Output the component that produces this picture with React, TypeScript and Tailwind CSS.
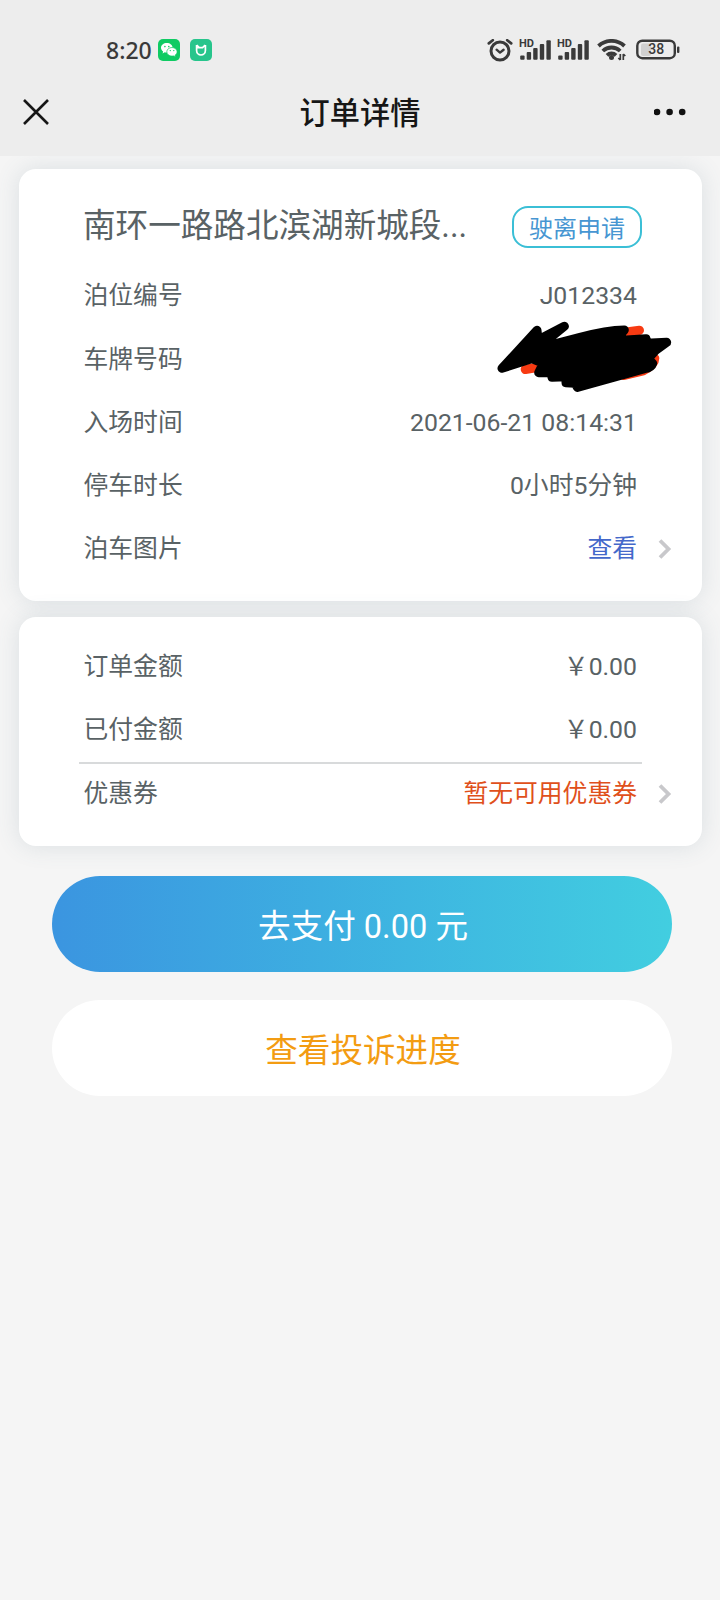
import React from "react";

const Chevron: React.FC = () => (
  <svg className="absolute right-[30px] top-1/2 -mt-[11px] h-5 w-[14px]" viewBox="0 0 14 20" fill="none">
    <path d="M2 1.5 L10.5 10 L2 18.5" stroke="#c8c8cb" strokeWidth="3.8" />
  </svg>
);

const Signal: React.FC = () => (
  <svg className="h-[22px] w-8" viewBox="0 0 32 22">
    <text
      x="0"
      y="7.8"
      fontSize="10"
      fontWeight="700"
      fontFamily="Roboto, sans-serif"
      textLength="15"
      lengthAdjust="spacingAndGlyphs"
      fill="#3a3a3a"
    >
      HD
    </text>
    <g fill="#3a3a3a">
      <rect x="1.2" y="16.6" width="4.4" height="4.2" rx="1" />
      <rect x="7.7" y="13" width="4.4" height="7.8" rx="1" />
      <rect x="14.2" y="9" width="4.4" height="11.8" rx="1" />
      <rect x="20.8" y="5" width="4.4" height="15.8" rx="1" />
      <rect x="27.4" y="1.2" width="4.4" height="19.6" rx="1" />
    </g>
  </svg>
);

const StatusBar: React.FC = () => (
  <div className="flex h-[68px] items-start justify-between pl-[106px] pr-[40px] pt-[39px]">
    <div className="flex items-center">
      <span className="w-[52px] font-['Noto_Sans','Open_Sans',sans-serif] text-[23px] font-medium leading-[22px] text-[#3a3a3a]">
        8:20
      </span>
      <svg className="h-[22px] w-[22px]" viewBox="0 0 22 22">
        <rect width="22" height="22" rx="5" fill="#0fcb63" />
        <path d="M8.800 4C5.600 4 3 6.100 3 8.800c0 1.500.8 2.800 2.100 3.700l-.5 1.900 2.100-1.100c.6.2 1.300.3 2 .3 3.300 0 5.900-2.100 5.900-4.800S12.100 4 8.800 4z" fill="#fff" />
        <path d="M14 8.500c-2.900 0-5.200 1.900-5.200 4.300s2.300 4.300 5.200 4.300c.6 0 1.200-.1 1.700-.2l1.800.9-.4-1.600c1.200-.8 2-2 2-3.400 0-2.400-2.300-4.300-5.100-4.300z" fill="#fff" stroke="#0fcb63" strokeWidth=".7" />
        <g fill="#0fcb63">
          <circle cx="6.900" cy="7.600" r=".8" />
          <circle cx="10.800" cy="7.600" r=".8" />
          <circle cx="12.300" cy="11.600" r=".7" />
          <circle cx="15.800" cy="11.600" r=".7" />
        </g>
      </svg>
      <svg className="ml-[10px] h-[22px] w-[22px]" viewBox="0 0 22 22" fill="none" stroke="#fff">
        <rect width="22" height="22" rx="5" fill="#27c58c" stroke="none" />
        <path d="M9.200 8.700H6.900V6M6.600 6v5.600a4.400 4.400 0 0 0 8.800 0V6M15.200 6l-2.600 2.700H9.200L6.700 6" strokeWidth="1.700" strokeLinejoin="round" />
      </svg>
    </div>

    <div className="flex items-start">
      <svg className="-ml-px mr-px h-6 w-[26px]" viewBox="0 0 26 24" fill="none" stroke="#3a3a3a" strokeLinecap="round">
        <circle cx="13" cy="12" r="9" strokeWidth="3" />
        <path d="M9.600 10.700l3.400 2.900 3.600-2.900" strokeWidth="2.400" strokeLinejoin="round" />
        <path d="M1.800 4.400l4-3.200M24.200 4.400l-4-3.200" strokeWidth="2.700" />
      </svg>
      <div className="ml-[5px] mr-px flex gap-[6px]">
        <Signal />
        <Signal />
      </div>
      <svg className="ml-[7px] mr-px h-6 w-[30px]" viewBox="0 0 30 24" fill="none" stroke="#3a3a3a" strokeWidth="3.800">
        <path d="M1.500 7a19 19 0 0 1 26 0" />
        <path d="M5.800 12a12.500 12.500 0 0 1 17.400 0" />
        <path d="M10 16.300a6.500 6.500 0 0 1 9 0" />
        <circle cx="14.500" cy="18.600" r="2.500" fill="#3a3a3a" stroke="none" />
        <path d="M23.300 15v6M21.300 19l2 2M26.300 21v-6M28.300 17l-2-2" strokeWidth="1.700" />
      </svg>
      <svg className="ml-[8px] h-[22px] w-11" viewBox="0 0 44 22">
        <rect x="5" y="4.500" width="10" height="12.500" rx="2" fill="#d0d0d0" />
        <rect x="1.300" y="1.700" width="37.500" height="17.500" rx="5" fill="none" stroke="#3a3a3a" strokeWidth="2.400" />
        <rect x="41" y="7.500" width="2.400" height="6.500" rx="1" fill="#3a3a3a" />
        <text x="20.300" y="15.400" fontSize="14" fontWeight="500" textAnchor="middle" fontFamily="Roboto, sans-serif" fill="#3a3a3a">
          38
        </text>
      </svg>
    </div>
  </div>
);

const Scribble: React.FC = () => (
  <svg
    className="absolute right-[12px] top-[-19px] h-[95px] w-[210px]"
    viewBox="0 0 630 285"
    strokeLinecap="round"
    strokeLinejoin="round"
  >
    <g stroke="#f73a12" fill="none" strokeWidth="28">
      <path d="M136 178 L220 164" />
      <path d="M400 76 Q440 64 478 61" />
      <path d="M524 145 Q524 164 490 182 L430 196" />
    </g>
    <path
      d="M66 175 L171 61 L174 90 L253 49 L170 116 L300 82 Q380 61 433 60 L405 92 L498 86 L500 100 L560 97 L528 120 L505 145 L518 160 Q514 173 494 176 L292 232 L285 220 L258 218 L258 200 L216 202 L213 188 L176 188 L190 160 L155 146 L66 175Z"
      fill="#000"
      stroke="#000"
      strokeWidth="27"
    />
  </svg>
);

type RowProps = {
  label: string;
  value?: string;
  valueClass?: string;
  arrow?: boolean;
  children?: React.ReactNode;
};

const Row: React.FC<RowProps> = ({ label, value, valueClass = "", arrow, children }) => (
  <div className="relative flex h-[63px] items-center justify-between pl-[64.5px] pr-[65px] text-[24.8px] leading-none">
    <span>{label}</span>
    <span className={valueClass}>{value}</span>
    {arrow && <Chevron />}
    {children}
  </div>
);

const App: React.FC = () => {
  return (
    <div className="min-h-[1600px] w-[720px] overflow-hidden bg-[#f5f5f5] font-['Roboto','Noto_Sans_CJK_SC',sans-serif] text-[#596265]">
      <header className="relative z-10 h-[156px] bg-[#ededed]">
        <StatusBar />
        <div className="flex h-[88px] items-center justify-between pl-[23px] pr-[34px] text-[#161616]">
          <svg className="h-[26px] w-[26px]" viewBox="0 0 26 26" stroke="currentColor" strokeWidth="2.6">
            <path d="M1 1l24 24M25 1L1 25" />
          </svg>
          <h1 className="ml-[17px] pt-[5px] text-[30.2px] font-medium leading-none">订单详情</h1>
          <svg className="h-2 w-8" viewBox="0 0 32 8" fill="#111">
            <circle cx="3" cy="4" r="3.300" />
            <circle cx="15.600" cy="4" r="3.300" />
            <circle cx="28.200" cy="4" r="3.300" />
          </svg>
        </div>
      </header>

      <main className="pt-[13px]">
        <section className="ml-[19px] h-[432px] w-[683px] rounded-[17px] bg-white pt-[37px] shadow-[0_0_24px_rgba(80,110,130,0.16)]">
          <div className="mb-[17px] flex h-[42px] items-center justify-between pl-[64px] pr-[60px]">
            <h2 className="whitespace-nowrap pb-[2px] text-[32.6px] leading-none">南环一路路北滨湖新城段...</h2>
            <button className="h-[42px] w-[130px] rounded-[16px] border-2 border-[#3bbfd6] pt-[3px] text-[24px] leading-none text-[#4796d2]">
              驶离申请
            </button>
          </div>
          <Row label="泊位编号" value="J012334" />
          <div className="h-px" />
          <Row label="车牌号码">
            <Scribble />
          </Row>
          <Row label="入场时间" value="2021-06-21 08:14:31" />
          <Row label="停车时长" value="0小时5分钟" />
          <Row label="泊车图片" value="查看" valueClass="text-[#4468ca]" arrow />
        </section>

        <section className="ml-[19px] mt-4 h-[229px] w-[683px] rounded-[17px] bg-white pt-[19px] shadow-[0_0_24px_rgba(80,110,130,0.16)]">
          <Row label="订单金额" value={"\uffe50.00"} />
          <Row label="已付金额" value={"\uffe50.00"} />
          <div className="mx-[60px] h-[2px] bg-[#d8dadb]" />
          <div className="-mt-px">
            <Row label="优惠券" value="暂无可用优惠券" valueClass="text-[#e0501b]" arrow />
          </div>
        </section>

        <div className="mt-[30px] flex flex-col gap-7 pl-[52px] pr-[48px] text-[32.600px]">
          <button className="h-24 rounded-full bg-linear-to-r from-[#3b95e0] to-[#42cee0] pl-[2px] pt-[6px] leading-none text-white">
            去支付 0.00 元
          </button>
          <button className="h-24 rounded-full bg-white pl-[2px] pt-[6px] leading-none text-[#f39c12]">查看投诉进度</button>
        </div>
      </main>
    </div>
  );
};

export default App;
